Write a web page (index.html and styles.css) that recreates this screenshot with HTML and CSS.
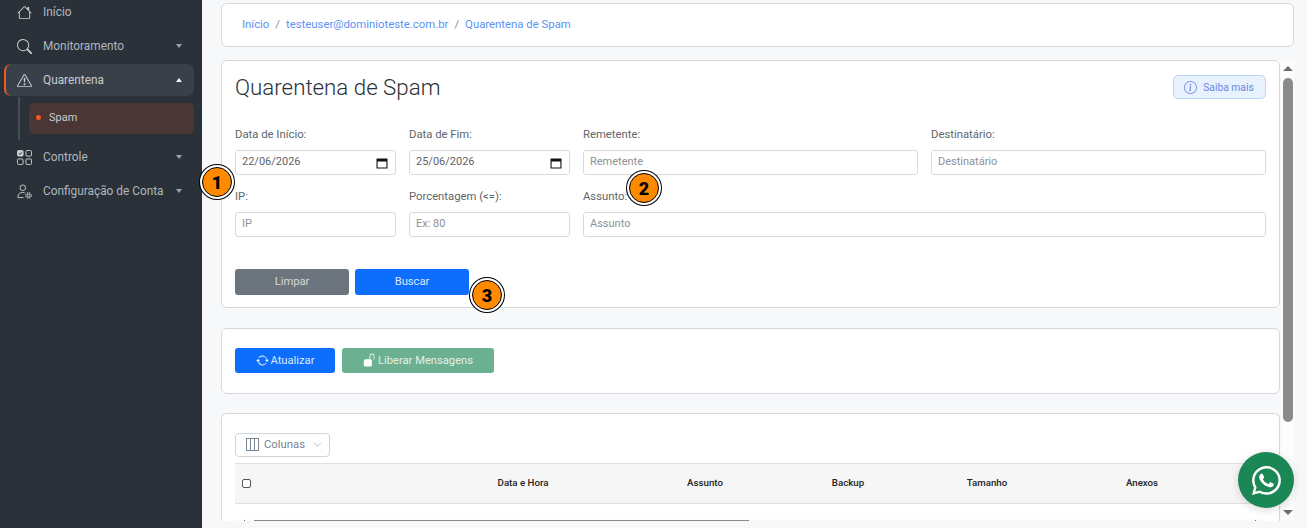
FILE: index.html
```html
<!DOCTYPE html>
<html lang="pt-BR">
<head>
    <meta charset="UTF-8">
    <meta name="viewport" content="width=device-width, initial-scale=1.0">
    <title>Quarentena de Spam</title>
    <link rel="stylesheet" href="styles.css">
</head>
<body>
    <aside class="sidebar">
        <nav class="menu">
            <a class="menu-item">
                <svg class="menu-icon" viewBox="0 0 16 16" fill="currentColor"><path d="M8.707 1.5a1 1 0 0 0-1.414 0L.646 8.146a.5.5 0 0 0 .708.708L2 8.207V13.5A1.5 1.5 0 0 0 3.5 15h9a1.5 1.5 0 0 0 1.5-1.5V8.207l.646.647a.5.5 0 0 0 .708-.708L13 5.793V2.5a.5.5 0 0 0-.5-.5h-1a.5.5 0 0 0-.5.5v1.293L8.707 1.5ZM13 7.207V13.5a.5.5 0 0 1-.5.5h-9a.5.5 0 0 1-.5-.5V7.207l5-5 5 5Z"/></svg>
                <span class="menu-label">Início</span>
            </a>
            <a class="menu-item">
                <svg class="menu-icon" viewBox="0 0 16 16" fill="currentColor"><path d="M11.742 10.344a6.5 6.5 0 1 0-1.397 1.398h-.001c.03.04.062.078.098.115l3.85 3.85a1 1 0 0 0 1.415-1.414l-3.85-3.85a1.007 1.007 0 0 0-.115-.1zM12 6.5a5.5 5.5 0 1 1-11 0 5.5 5.5 0 0 1 11 0z"/></svg>
                <span class="menu-label">Monitoramento</span>
                <span class="caret"></span>
            </a>
            <a class="menu-item active">
                <svg class="menu-icon" viewBox="0 0 16 16" fill="currentColor"><path d="M7.938 2.016A.13.13 0 0 1 8.002 2a.13.13 0 0 1 .063.016.146.146 0 0 1 .054.057l6.857 11.667c.036.06.035.124.002.183a.163.163 0 0 1-.054.06.116.116 0 0 1-.066.017H1.146a.115.115 0 0 1-.066-.017.163.163 0 0 1-.054-.06.176.176 0 0 1 .002-.183L7.884 2.073a.147.147 0 0 1 .054-.057zm1.044-.45a1.13 1.13 0 0 0-1.96 0L.165 13.233c-.457.778.091 1.767.98 1.767h13.713c.889 0 1.438-.99.98-1.767L8.982 1.566z"/><path d="M7.002 12a1 1 0 1 1 2 0 1 1 0 0 1-2 0zM7.1 5.995a.905.905 0 1 1 1.8 0l-.35 3.507a.552.552 0 0 1-1.1 0L7.1 5.995z"/></svg>
                <span class="menu-label">Quarentena</span>
                <span class="caret up"></span>
            </a>
            <div class="submenu">
                <a class="submenu-item"><span class="dot"></span>Spam</a>
            </div>
            <a class="menu-item">
                <svg class="menu-icon" viewBox="0 0 16 16" fill="none" stroke="currentColor" stroke-width="1"><rect x="0.5" y="0.5" width="6" height="6" rx="1.2" fill="currentColor"/><path d="M2 3.6l1.2 1.1L5.1 2.4" stroke="#2a3139"/><rect x="9.5" y="0.5" width="6" height="6" rx="1.2"/><rect x="0.5" y="9.5" width="6" height="6" rx="1.2"/><rect x="9.5" y="9.5" width="6" height="6" rx="1.2"/></svg>
                <span class="menu-label">Controle</span>
                <span class="caret"></span>
            </a>
            <a class="menu-item">
                <svg class="menu-icon" viewBox="0 0 16 16" fill="none" stroke="currentColor" stroke-width="1"><circle cx="6.2" cy="4" r="3"/><path d="M1 14.5v-.8c0-3 2.2-4.7 5.2-4.7 .8 0 1.4 .1 2 .3M1 14.5h6"/><circle cx="12.2" cy="12.2" r="1.4"/><circle cx="12.2" cy="12.2" r="2.9" stroke-width="1.2" stroke-dasharray="1.4 .9"/></svg>
                <span class="menu-label">Configuração de Conta</span>
                <span class="caret"></span>
            </a>
        </nav>
    </aside>

    <main class="main">
        <div class="card breadcrumb">
            <a>Início</a><span class="sep">/</span><a>testeuser@dominioteste.com.br</a><span class="sep">/</span><a>Quarentena de Spam</a>
        </div>

        <div class="scroll-area">
            <div class="scroll-content">
                <section class="card filters">
                    <div class="filters-head">
                        <h1>Quarentena de Spam</h1>
                        <button class="btn-info">
                            <svg class="icon-13" viewBox="0 0 16 16" fill="currentColor"><path d="M8 15A7 7 0 1 1 8 1a7 7 0 0 1 0 14zm0 1A8 8 0 1 0 8 0a8 8 0 0 0 0 16z"/><path d="m8.93 6.588-2.29.287-.082.38.45.083c.294.07.352.176.288.469l-.738 3.468c-.194.897.105 1.319.808 1.319.545 0 1.178-.252 1.465-.598l.088-.416c-.2.176-.492.246-.686.246-.275 0-.375-.193-.304-.533L8.93 6.588zM9 4.5a1 1 0 1 1-2 0 1 1 0 0 1 2 0z"/></svg>
                            Saiba mais
                        </button>
                    </div>
                    <div class="form-grid">
                        <div class="field col-2">
                            <label>Data de Início:</label>
                            <div class="date-input">
                                <span>22/06/2026</span>
                                <svg class="cal" viewBox="0 0 12 12"><path d="M1 1.5h10a.5.5 0 0 1 .5.5v9a.5.5 0 0 1-.5.5H1a.5.5 0 0 1-.5-.5V2a.5.5 0 0 1 .5-.5zM1.6 4.4v6h8.8v-6z" fill="#111" fill-rule="evenodd"/></svg>
                            </div>
                        </div>
                        <div class="field col-2">
                            <label>Data de Fim:</label>
                            <div class="date-input">
                                <span>25/06/2026</span>
                                <svg class="cal" viewBox="0 0 12 12"><path d="M1 1.5h10a.5.5 0 0 1 .5.5v9a.5.5 0 0 1-.5.5H1a.5.5 0 0 1-.5-.5V2a.5.5 0 0 1 .5-.5zM1.6 4.4v6h8.8v-6z" fill="#111" fill-rule="evenodd"/></svg>
                            </div>
                        </div>
                        <div class="field col-4">
                            <label>Remetente:</label>
                            <input type="text" placeholder="Remetente">
                        </div>
                        <div class="field col-4">
                            <label>Destinatário:</label>
                            <input type="text" placeholder="Destinatário">
                        </div>
                        <div class="field col-2">
                            <label>IP:</label>
                            <input type="text" placeholder="IP">
                        </div>
                        <div class="field col-2">
                            <label>Porcentagem (&lt;=):</label>
                            <input type="text" placeholder="Ex: 80">
                        </div>
                        <div class="field col-8">
                            <label>Assunto:</label>
                            <input type="text" placeholder="Assunto">
                        </div>
                    </div>
                    <div class="form-actions">
                        <button class="btn btn-gray">Limpar</button>
                        <button class="btn btn-blue">Buscar</button>
                    </div>
                </section>

                <section class="card toolbar">
                    <button class="btn btn-blue btn-refresh">
                        <svg class="icon-13" viewBox="0 0 16 16" fill="#fff"><path d="M11.534 7h3.932a.25.25 0 0 1 .192.41l-1.966 2.36a.25.25 0 0 1-.384 0l-1.966-2.36a.25.25 0 0 1 .192-.41zm-11 2h3.932a.25.25 0 0 0 .192-.41L2.692 6.23a.25.25 0 0 0-.384 0L.342 8.59A.25.25 0 0 0 .534 9z"/><path d="M8 3c-1.552 0-2.94.707-3.857 1.818a.5.5 0 1 1-.771-.636A6.002 6.002 0 0 1 13.917 7H12.9A5.002 5.002 0 0 0 8 3zM3.1 9a5.002 5.002 0 0 0 8.757 2.182.5.5 0 1 1 .771.636A6.002 6.002 0 0 1 2.083 9H3.1z"/></svg>
                        Atualizar
                    </button>
                    <button class="btn btn-green">
                        <svg class="icon-lock" viewBox="0 0 16 16" fill="#fff"><path d="M11 1a2 2 0 0 0-2 2v4a2 2 0 0 1 2 2v5a2 2 0 0 1-2 2H3a2 2 0 0 1-2-2V9a2 2 0 0 1 2-2h5V3a3 3 0 0 1 6 0v4a.5.5 0 0 1-1 0V3a2 2 0 0 0-2-2z"/></svg>
                        Liberar Mensagens
                    </button>
                </section>

                <section class="card results">
                    <button class="btn-columns">
                        <svg class="icon-13" viewBox="0 0 13 13" fill="none" stroke="currentColor"><rect x="0.5" y="0.5" width="12" height="12"/><path d="M4.5 .5v12M8.5 .5v12"/></svg>
                        Colunas
                        <svg class="chevron" viewBox="0 0 10 6" fill="none" stroke="currentColor"><path d="M1 1l4 4 4-4"/></svg>
                    </button>
                    <div class="table-head">
                        <div class="cell-check"><span class="checkbox"></span></div>
                        <div>Data e Hora</div>
                        <div>Assunto</div>
                        <div>Backup</div>
                        <div>Tamanho</div>
                        <div>Anexos</div>
                    </div>
                    <div class="hscroll">
                        <span class="hscroll-tip"></span>
                        <div class="hscroll-thumb"></div>
                        <span class="hscroll-tip"></span>
                    </div>
                </section>
            </div>

            <div class="scrollbar">
                <span class="arrow-up"></span>
                <div class="scroll-thumb"></div>
                <span class="arrow-down"></span>
            </div>
        </div>
    </main>

    <div class="marker marker-1">1</div>
    <div class="marker marker-2">2</div>
    <div class="marker marker-3">3</div>

    <a class="whatsapp">
        <svg viewBox="0 0 16 16" fill="currentColor"><path d="M13.601 2.326A7.854 7.854 0 0 0 7.994 0C3.627 0 .068 3.558.064 7.926c0 1.399.366 2.76 1.057 3.965L0 16l4.204-1.102a7.933 7.933 0 0 0 3.79.965h.004c4.368 0 7.926-3.558 7.93-7.93A7.898 7.898 0 0 0 13.6 2.326zM7.994 14.521a6.573 6.573 0 0 1-3.356-.92l-.24-.144-2.494.654.666-2.433-.156-.251a6.56 6.56 0 0 1-1.007-3.505c0-3.626 2.957-6.584 6.591-6.584a6.56 6.56 0 0 1 4.66 1.931 6.557 6.557 0 0 1 1.928 4.66c-.004 3.639-2.961 6.592-6.592 6.592zm3.615-4.934c-.197-.099-1.17-.578-1.353-.646-.182-.065-.315-.099-.445.099-.133.197-.513.646-.627.775-.114.133-.232.148-.43.05-.197-.1-.836-.308-1.592-.985-.59-.525-.985-1.175-1.103-1.372-.114-.198-.011-.304.088-.403.087-.088.197-.232.296-.346.1-.114.133-.198.198-.33.065-.134.034-.248-.015-.347-.05-.099-.445-1.076-.612-1.47-.16-.389-.323-.335-.445-.34-.114-.007-.247-.007-.38-.007a.729.729 0 0 0-.529.247c-.182.198-.691.677-.691 1.654 0 .977.71 1.916.81 2.049.098.133 1.394 2.132 3.383 2.992.47.205.84.326 1.129.418.475.152.904.129 1.246.08.38-.058 1.171-.48 1.338-.943.164-.464.164-.86.114-.943-.049-.084-.182-.133-.38-.232z"/></svg>
    </a>
</body>
</html>
```

FILE: styles.css
```css
* {
    box-sizing: border-box;
}

html, body {
    height: 100%;
}

body {
    margin: 0;
    display: flex;
    overflow: hidden;
    font-family: Roboto, "Liberation Sans", sans-serif;
    font-size: 12px;
    background-color: #f7f8fa;
    color: #5f6368;
}

/* sidebar */
.sidebar {
    width: 202px;
    flex-shrink: 0;
    background-color: #2a3139;
    overflow: hidden;
}

.menu {
    margin-top: -5px;
    padding: 0 8px 0 4px;
    display: flex;
    flex-direction: column;
}

.menu-item {
    display: flex;
    align-items: center;
    height: 34px;
    padding: 0 12.5px 0 13px;
    color: #aeb6bf;
    font-size: 11.85px;
}

.menu-item.active {
    height: 32px;
    margin: 1px 0;
    background-color: #3a4049;
    border-radius: 7px;
    border-left: 2px solid #f15a22;
    padding-left: 11px;
    color: #c4cad1;
}

.menu-icon {
    width: 15px;
    height: 15px;
    margin-right: 11px;
    flex-shrink: 0;
    color: #c9ced4;
}

.menu-label {
    flex: 1;
    white-space: nowrap;
}

.caret {
    width: 0;
    height: 0;
    border-left: 3.5px solid transparent;
    border-right: 3.5px solid transparent;
    border-top: 4px solid #9aa2ab;
}

.caret.up {
    border-top: 0;
    border-bottom: 4px solid #f2f3f5;
}

.submenu {
    height: 43px;
    margin-left: 14px;
    padding: 6px 0 0 9px;
    border-left: 2px solid #474d56;
}

.submenu-item {
    display: flex;
    align-items: center;
    height: 31px;
    padding: 0 0 2px 7px;
    background-color: #4a3634;
    border-radius: 5px;
    color: #c9cdd2;
    font-size: 11px;
}

.dot {
    width: 5px;
    height: 5px;
    margin-right: 8px;
    border-radius: 50%;
    background-color: #f15a22;
}

/* main area */
.main {
    flex: 1;
    min-width: 0;
    display: flex;
    flex-direction: column;
    padding: 3px 13px 7px 19px;
}

.card {
    background-color: #fff;
    border: 1px solid #d6d8db;
    border-radius: 6px;
}

.breadcrumb {
    height: 44px;
    flex-shrink: 0;
    display: flex;
    align-items: center;
    padding: 0 20px 2px;
    margin-bottom: 13px;
    font-size: 11.35px;
    color: #5b93f5;
}

.breadcrumb .sep {
    margin: 0 6px;
    color: #8a8f96;
}

.scroll-area {
    flex: 1;
    min-height: 0;
    display: flex;
    overflow: hidden;
}

.scroll-content {
    width: 1059px;
    flex-shrink: 0;
}

/* fake page scrollbar */
.scrollbar {
    flex: 1;
    margin-left: 1px;
    display: flex;
    flex-direction: column;
    align-items: center;
    background-color: #fcfcfc;
    padding: 6px 0 6px;
}

.scroll-thumb {
    width: 10px;
    height: 344px;
    margin-top: 7px;
    background-color: #8a8a8a;
    border-radius: 5px;
}

.arrow-up, .arrow-down {
    width: 0;
    height: 0;
    border-left: 5px solid transparent;
    border-right: 5px solid transparent;
}

.arrow-up {
    border-bottom: 5px solid #6e6e6e;
}

.arrow-down {
    margin-top: auto;
    border-top: 5px solid #6e6e6e;
}

/* filters */
.filters {
    height: 248px;
    padding: 14px 13px 0 13px;
    margin-bottom: 20px;
}

.filters-head {
    display: flex;
    justify-content: space-between;
    align-items: flex-start;
    height: 51px;
}

h1 {
    margin: 0;
    font-size: 22.3px;
    font-weight: 300;
    line-height: 25px;
    color: #2b3138;
}

.btn-info {
    display: flex;
    align-items: center;
    gap: 6px;
    width: 93px;
    height: 24px;
    justify-content: center;
    padding-left: 5px;
    background-color: #e8f1fe;
    border: 1px solid #bcd6fb;
    border-radius: 5px;
    color: #6a87dc;
    font-family: inherit;
    font-size: 10.3px;
}

.icon-13 {
    width: 13px;
    height: 13px;
    flex-shrink: 0;
}

.icon-lock {
    width: 13px;
    height: 14px;
    margin-top: -1px;
    flex-shrink: 0;
}

.form-grid {
    display: grid;
    grid-template-columns: repeat(12, 1fr);
    column-gap: 13px;
    row-gap: 13px;
}

.col-2 { grid-column: span 2; }
.col-4 { grid-column: span 4; }
.col-8 { grid-column: span 8; }

.field label {
    display: block;
    height: 16px;
    line-height: 17px;
    margin-bottom: 8px;
    font-size: 11.3px;
    color: #60656b;
}

.field input, .date-input {
    display: flex;
    align-items: center;
    width: 100%;
    height: 25px;
    padding: 0 6px 2px;
    background-color: #fff;
    border: 1px solid #d9dbe3;
    border-radius: 3px;
    font-family: inherit;
    font-size: 11px;
    color: #5f6368;
}

.field input::placeholder {
    color: #8d9197;
    opacity: 1;
}

.date-input {
    justify-content: space-between;
    padding-right: 7px;
}

.cal {
    width: 12px;
    height: 12px;
    margin-top: 2px;
}

.form-actions {
    display: flex;
    gap: 6px;
    margin-top: 32px;
}

.btn {
    display: inline-flex;
    align-items: center;
    justify-content: center;
    gap: 2px;
    height: 25px;
    padding: 0 0 1px;
    border: none;
    border-radius: 3px;
    color: #fff;
    font-family: inherit;
    font-size: 11.2px;
}

.form-actions .btn {
    width: 114px;
    height: 26px;
    padding-bottom: 2px;
}

.btn-gray {
    background-color: #6c757d;
    color: #d5d8db;
}

.btn-blue {
    background-color: #0d6efd;
    color: #dbe8ff;
}

.btn-green {
    width: 152px;
    background-color: #6bb091;
    color: #e2f0e9;
}

.btn-refresh {
    width: 100px;
}

/* toolbar */
.toolbar {
    height: 66px;
    display: flex;
    align-items: flex-start;
    gap: 7px;
    padding: 19px 13px 0;
    margin-bottom: 19px;
}

/* results */
.results {
    height: 140px;
    padding: 19px 13px 0;
    border-bottom: 0;
    border-radius: 6px 6px 0 0;
}

.btn-columns {
    display: flex;
    align-items: center;
    gap: 5px;
    width: 95px;
    height: 24px;
    padding: 0 0 2px 10px;
    margin-bottom: 6px;
    background-color: #fff;
    border: 1px solid #cfd3da;
    border-radius: 4px;
    color: #7b8494;
    font-family: inherit;
    font-size: 11.3px;
}

.chevron {
    width: 9px;
    height: 5px;
    margin-left: 3px;
    color: #a8adb5;
}

.table-head {
    display: grid;
    grid-template-columns: 198px 180px 184px 102px 176px 134px 57px;
    align-items: center;
    height: 41px;
    padding-bottom: 2px;
    background-color: #f6f6f6;
    border-top: 1px solid #e0e0e0;
    border-bottom: 1px solid #e0e0e0;
    font-size: 9.7px;
    font-weight: 500;
    text-align: center;
    color: #222;
}

.cell-check {
    display: flex;
    padding: 2px 0 0 7px;
}

.checkbox {
    width: 9px;
    height: 9px;
    background-color: #fff;
    border: 1px solid #555;
    border-radius: 2px;
}

.hscroll {
    display: flex;
    align-items: flex-end;
    justify-content: space-between;
    margin-top: 15px;
    height: 3px;
    padding: 0 10px 0 9px;
    background-color: #fbfbfb;
}

.hscroll-tip {
    width: 1px;
    height: 2px;
    background-color: #6e6e6e;
}

.hscroll-thumb {
    width: 495px;
    height: 2px;
    margin: 0 auto 0 9px;
    background-color: #8a8a8a;
}

/* numbered callouts over the page */
.marker {
    position: absolute;
    width: 30px;
    height: 30px;
    display: flex;
    align-items: center;
    justify-content: center;
    background-color: #ff8a00;
    border: 1px solid #000;
    border-radius: 50%;
    box-shadow: 0 0 0 2px #fff, 0 0 0 3px #000;
    font-size: 18px;
    font-weight: 900;
    color: #000;
}

.marker-1 { left: 202px; top: 167px; }
.marker-2 { left: 629px; top: 173px; }
.marker-3 { left: 472px; top: 280px; }

.whatsapp {
    position: absolute;
    left: 1238px;
    top: 452px;
    width: 56px;
    height: 56px;
    display: flex;
    align-items: center;
    justify-content: center;
    background-color: #1a8754;
    border-radius: 50%;
    box-shadow: 0 2px 10px rgba(0, 0, 0, 0.15);
    color: #fff;
}

.whatsapp svg {
    width: 29px;
    height: 29px;
}
```
